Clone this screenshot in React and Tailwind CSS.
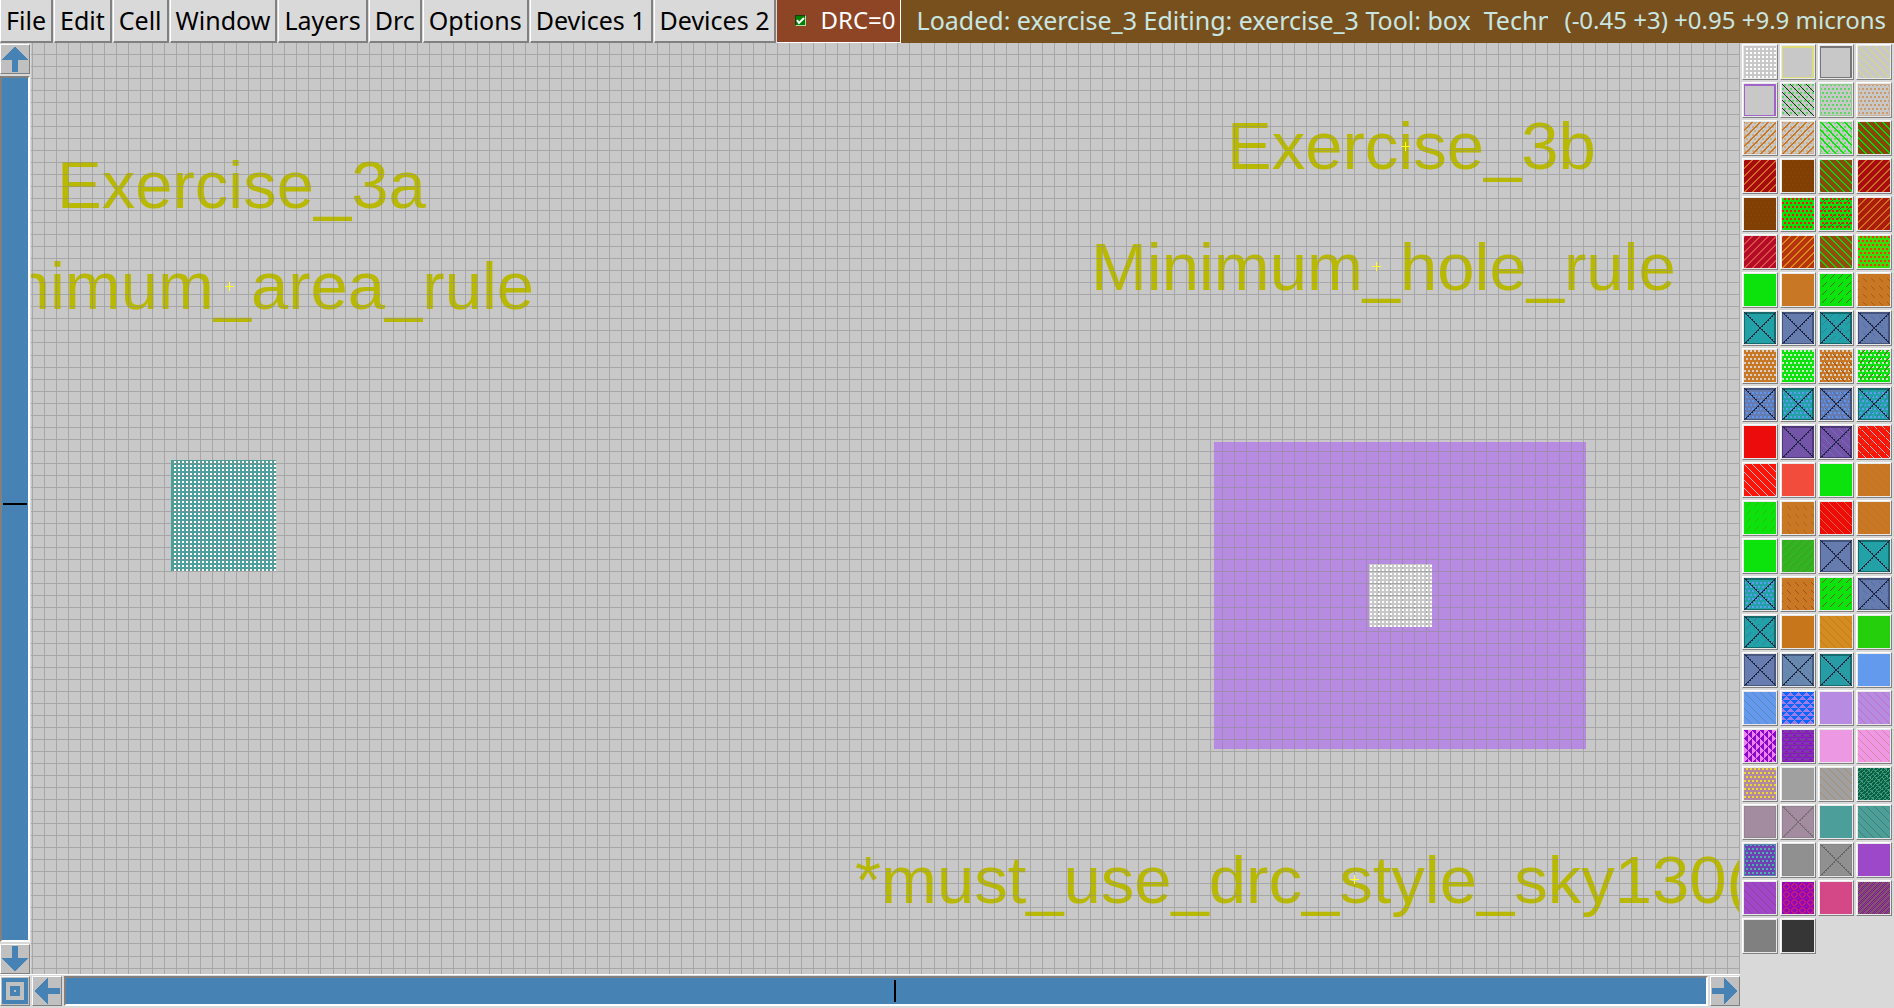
import React from "react";

const SIZE = 32;

/* ---- stipple patterns: each tells whether pixel (x, y) is painted ---- */
const grid = (x, y) => x % 4 >= 2 && y % 4 >= 2;
const stag = (x, y) => y % 4 < 2 && (x + (y % 8 < 4 ? 2 : 0)) % 4 < 2;
const back = (x, y) => (x - y + 64) % 8 === 0;
const back2 = (x, y) => (x - y + 64) % 8 < 2;
const fwd = (x, y) => (x + y) % 8 === 0;
const fwd2 = (x, y) => (x + y + 1) % 8 < 2;
const dashF = (x, y) => (x + y) % 8 === 6 && y % 8 < 5;
const dashB = (x, y) => (x - y + 64) % 8 === 1 && (y + 4) % 8 < 4;
const frame = (x, y) => x < 1 || y < 1 || x > 30 || y > 30;
const frame2 = (x, y) => x < 1 || y < 2 || x > 29 || y > 30;
const cross = (x, y) => x === y || x + y === 31 || (x % 2 === 0 && (x - y === 1 || x + y === 32));
const tri = (x, y) => {
  const cx = (x + (y % 8 < 4 ? 0 : 4)) % 8;
  return Math.abs(cx - 4) <= 3 - (y % 4);
};
const triSide = (x, y) => tri(y, 31 - x);
const rules = (x, y) => y % 4 === 2;
const rings = (x, y) => {
  const a = Math.abs((x % 8) - 4);
  const b = Math.abs((y % 8) - 4);
  const d = a + b;
  return (d >= 3 && d <= 4 && a < 4 && b < 4) || (a === 4 && b === 4);
};
const weave = (x, y) => (x + y) % 4 === 0 || ((x - y + 64) % 6 < 2 && (x + 2 * y) % 5 < 3);
const mesh = (x, y) => (x + y) % 2 === 0 || ((x >> 1) + (y >> 1)) % 3 === 0;

function pathFor(test) {
  let d = "";
  for (let y = 0; y < SIZE; y++) {
    let x = 0;
    while (x < SIZE) {
      if (!test(x, y)) {
        x++;
        continue;
      }
      const from = x;
      while (x < SIZE && test(x, y)) x++;
      d += `M${from} ${y}h${x - from}v1h${from - x}z`;
    }
  }
  return d;
}

const boxed = (bg, edge, ...extra) => [bg, ...extra, [frame2, edge], [cross, "#1b2440"]];
const TEAL = ["#22a2a6", "#166a6c"];
const SLATE = ["#677cae", "#45547c"];

const SWATCHES = [
  ["#c8c8c8", [grid, "#ffffff"]],
  ["#c8c8c8", [frame2, "#dcdc78"]],
  ["#c8c8c8", [frame2, "#787878"]],
  ["#c8c8c8", [back, "#dede62"]],

  ["#c8c8c8", [frame2, "#a064c8"]],
  ["#c8c8c8", [stag, "#5fd664"], [back, "#1c2c1c"]],
  ["#c8c8c8", [stag, "#5fd664"], [frame, "#90cc90"]],
  ["#c8c8c8", [stag, "#cc9a68"], [frame, "#ccb098"]],

  ["#c8c8c8", [stag, "#ccab88"], [frame, "#ccb098"], [fwd2, "#c87820"]],
  ["#c8c8c8", [stag, "#ccab88"], [frame, "#ccb098"], [fwd2, "#c87820"]],
  ["#c8c8c8", [stag, "#64dc64"], [frame, "#90cc90"], [back2, "#0be00b"]],
  ["#8a4408", [back2, "#0ad80a"]],

  ["#a80a0e", [fwd2, "#c87020"]],
  ["#804004", [stag, "#864206"]],
  ["#8a480c", [back2, "#10d010"]],
  ["#a80c0e", [fwd2, "#c87020"]],

  ["#804004", [stag, "#864206"]],
  ["#0edc0c", [stag, "#ee1608"]],
  ["#0edc0c", [stag, "#ee1608"], [dashF, "#406810"]],
  ["#ac1c0c", [fwd2, "#cc7018"]],

  ["#b40c28", [fwd2, "#d85040"]],
  ["#b8340c", [fwd2, "#d88c18"]],
  ["#964a10", [back2, "#20cc10"]],
  ["#38dc08", [stag, "#f03808"]],

  ["#0ce20c"],
  ["#c87824"],
  ["#0ce20c", [dashF, "#447408"]],
  ["#c87824", [dashB, "#a45c10"]],

  boxed(...TEAL),
  boxed(...SLATE),
  boxed(...TEAL, [dashF, "#347ca8"]),
  boxed(...SLATE, [dashB, "#526aa8"]),

  ["#c87824", [stag, "#d8d0c8"]],
  ["#0ce20c", [stag, "#cce4cc"]],
  ["#c87824", [stag, "#d8d0c8"], [dashB, "#a05010"]],
  ["#0ce20c", [stag, "#cce4cc"], [dashF, "#885020"]],

  boxed(...SLATE, [stag, "#5c94ee"]),
  boxed(...TEAL, [stag, "#5c9cf0"]),
  boxed(...SLATE, [stag, "#5c94ee"], [dashB, "#4a68a8"]),
  boxed(...TEAL, [stag, "#5c9cf0"], [dashF, "#3080a8"]),

  ["#ec0c0c"],
  boxed("#7454a8", "#503878"),
  boxed("#7454a8", "#503878", [back, "#7070b4"]),
  ["#fc1408", [back, "#c0b8c0"], [dashF, "#cc4410"]],

  ["#fc1408", [back, "#c0b8c0"]],
  ["#f24c3c"],
  ["#0ce20c"],
  ["#c87824", [back, "#c47420"]],

  ["#0ce20c", [dashF, "#38b40c"]],
  ["#c87824", [dashB, "#b0641c"]],
  ["#ec0c0c", [back, "#f06428"]],
  ["#c87824", [back, "#c07420"]],

  ["#0ce20c"],
  ["#38ac24", [fwd, "#20cc14"]],
  boxed(...SLATE),
  boxed(...TEAL),

  boxed(...TEAL, [stag, "#5c9cf0"]),
  ["#c87824", [dashB, "#a05010"]],
  ["#0ce20c", [dashF, "#746010"]],
  boxed(...SLATE, [dashB, "#526aa8"]),

  boxed(...TEAL, [dashF, "#347ca8"]),
  ["#c8761c"],
  ["#d48c20", [back, "#c07c20"]],
  ["#24d00c", [fwd, "#2cc80c"]],

  boxed("#687cb0", "#485880"),
  boxed("#6888b0", "#485c80", [back, "#6480ac"]),
  boxed("#289ca4", "#186c70"),
  ["#649aee"],

  ["#649aee", [back, "#6480b8"]],
  ["#9c7ce8", [tri, "#0c64f8"]],
  ["#b88be2"],
  ["#b88be2", [back, "#c070b8"]],

  ["#ec84ee", [triSide, "#8c08c8"]],
  ["#8c10c8", [tri, "#8038b0"], [rules, "#7c3898"]],
  ["#ec98e2"],
  ["#ec98e2", [back, "#e480a8"]],

  ["#b088a4", [stag, "#ecdc28"]],
  ["#a0a0a0"],
  ["#a0a0a0", [back, "#ac8c70"]],
  ["#0c6038", [weave, "#38988c"]],

  ["#a48ca0", [frame, "#948490"]],
  ["#a48ca0", [frame, "#948490"], [cross, "#766c74"]],
  ["#4c9e9a"],
  ["#4c9e9a", [back, "#488068"]],

  ["#7040b4", [stag, "#48b4a8"], [frame, "#5484b0"]],
  ["#909090", [frame, "#888888"]],
  ["#909090", [frame, "#888888"], [cross, "#646464"]],
  ["#9c48c8"],

  ["#9c48c8", [back, "#a03c98"]],
  ["#9008b8", [rings, "#c41c7c"]],
  ["#d44888"],
  ["#80189c", [mesh, "#84546c"]],

  ["#808080"],
  ["#363636"],
];

function Swatch({ layers, index }) {
  const [bg, ...patterns] = layers;
  return (
    <button
      type="button"
      aria-label={`Layer ${index + 1}`}
      className="border border-t-white border-l-white border-r-[#808080] border-b-[#808080] bg-[#e8e8e8] p-px"
    >
      <svg viewBox="0 0 32 32" className="block size-8" shapeRendering="crispEdges">
        <rect width="32" height="32" fill={bg} />
        {patterns.map(([test, color], i) => (
          <path key={i} d={pathFor(test)} fill={color} />
        ))}
      </svg>
    </button>
  );
}

const BUTTON =
  "size-[30px] shrink-0 border border-t-white border-l-white border-r-[#808080] border-b-[#808080] bg-[#c0c0c0] p-px";

function ArrowButton({ label, turn = "" }) {
  return (
    <button type="button" aria-label={label} className={BUTTON}>
      <svg viewBox="0 0 26 26" className={`block size-[26px] ${turn}`} shapeRendering="crispEdges">
        <path d="M13 0L26 14H16V26H10V14H0z" fill="#4682b4" />
      </svg>
    </button>
  );
}

const columns = Array.from({ length: 240 }, (_, i) => 1 + Math.round((i * 601) / 50));
const rows = Array.from({ length: 140 }, (_, i) => 11 + Math.round((i * 601) / 50));
const gridPath =
  columns.map((x) => `M${x} 0h1v1600h-1z`).join("") + rows.map((y) => `M0 ${y}h2800v1h-2800z`).join("");

const LABELS = [
  [26, 165, "Exercise_3a"],
  [-89, 266, "Minimum_area_rule"],
  [1196, 126, "Exercise_3b"],
  [1060, 247, "Minimum_hole_rule"],
  [824, 860, "*must_use_drc_style_sky130(full)"],
];

const MARKS = [
  [198, 243],
  [1374, 103],
  [1345, 223],
  [1323, 836],
];

function Layout() {
  return (
    <svg className="block h-full w-full" role="img" aria-label="Layout canvas">
      <defs>
        <pattern id="select" x="3" y="2" width="4" height="4" patternUnits="userSpaceOnUse">
          <rect width="2" height="2" fill="#ffffff" />
        </pattern>
      </defs>
      <rect width="100%" height="100%" fill="#c8c8c8" />
      <g shapeRendering="crispEdges">
        <rect x="140" y="417" width="105" height="111" fill="#4ba09b" />
        <path d="M1183 399h372v307h-372zM1338 521v63h63v-63z" fill="#b88be2" fillRule="evenodd" />
      </g>
      <g fill="#b9b900" fontSize="67" fontFamily='"Liberation Sans", Arial, sans-serif'>
        {LABELS.map(([x, y, text]) => (
          <text key={text} x={x} y={y}>
            {text}
          </text>
        ))}
      </g>
      <path d={gridPath} fill="#8c8c8c" fillOpacity="0.55" shapeRendering="crispEdges" />
      <g shapeRendering="crispEdges">
        <rect x="141" y="417" width="104" height="111" fill="url(#select)" />
        <rect x="1338" y="521" width="63" height="63" fill="url(#select)" />
        {MARKS.map(([x, y]) => (
          <path key={x} d={`M${x - 4} ${y}h9v1h-9zM${x} ${y - 4}h1v9h-1z`} fill="#ffff20" />
        ))}
      </g>
    </svg>
  );
}

const MENUS = ["File", "Edit", "Cell", "Window", "Layers", "Drc", "Options", "Devices 1", "Devices 2"];

export default function App() {
  return (
    <div className="flex h-screen flex-col overflow-hidden bg-[#d9d9d9] font-['Noto_Sans',sans-serif] text-[25px] leading-8 text-black">
      <header className="flex h-[43px] shrink-0 whitespace-nowrap">
        <nav className="flex shrink-0 gap-px">
          {MENUS.map((name) => (
            <button
              key={name}
              type="button"
              className="border-r-2 border-b-2 border-l border-r-[#808080] border-b-[#808080] border-l-white bg-[#d9d9d9] px-[5px] pb-[2px]"
            >
              {name}
            </button>
          ))}
        </nav>
        <label className="ml-px flex shrink-0 items-center gap-[14px] border-r border-b border-white bg-[#8e4526] pr-1 pb-[2px] pl-[18px] text-2xl text-white">
          <span className="relative size-[11px]">
            <input
              type="checkbox"
              defaultChecked
              className="block size-[11px] appearance-none border border-t-[#1c3c10] border-l-[#1c3c10] border-r-[#b8d8b0] border-b-[#b8d8b0] bg-[#008000]"
            />
            <svg viewBox="0 0 11 11" className="pointer-events-none absolute inset-0 size-[11px]">
              <path d="M2 5l2 3 5-5" fill="none" stroke="white" strokeWidth="2" />
            </svg>
          </span>
          DRC=0
        </label>
        <div className="flex min-w-0 flex-1 items-center bg-[#78501e] pr-2 pb-[3px] pl-4 text-[#c8e6e2]">
          <div className="min-w-0 flex-1 overflow-hidden whitespace-pre">
            Loaded: exercise_3 Editing: exercise_3 Tool: box  Technology: sky130A
          </div>
          <div className="ml-4 shrink-0 text-2xl leading-8">(-0.45 +3) +0.95 +9.9 microns</div>
        </div>
      </header>

      <div className="flex min-h-0 flex-1">
        <div className="flex min-w-0 flex-1 flex-col">
          <div className="flex min-h-0 flex-1">
            <div className="flex w-[31px] shrink-0 flex-col gap-[2px] pt-px">
              <ArrowButton label="Scroll up" />
              <div className="flex w-[30px] flex-1 flex-col border-2 border-t-[#808080] border-r-white border-b-white border-l-[#808080] bg-[#4682b4] px-px">
                <div className="grow-[425]" />
                <div className="h-[2px] w-full bg-black" />
                <div className="grow-[435]" />
              </div>
              <ArrowButton label="Scroll down" turn="rotate-180" />
            </div>
            <div className="min-w-0 flex-1 border-r border-[#a8a8a8]">
              <Layout />
            </div>
          </div>
          <div className="flex h-[34px] shrink-0 gap-[2px] border-t border-white pt-px">
            <button type="button" aria-label="Zoom to fit" className={BUTTON}>
              <svg viewBox="0 0 26 26" className="block size-[26px]" shapeRendering="crispEdges">
                <path
                  d="M0 0h26v26H0zM4 4v18h18V4zM8 8h10v10H8zM12 12v2h2v-2z"
                  fill="#4682b4"
                  fillRule="evenodd"
                />
              </svg>
            </button>
            <ArrowButton label="Scroll left" turn="-rotate-90" />
            <div className="flex h-[30px] flex-1 border-2 border-t-[#808080] border-r-white border-b-white border-l-[#808080] bg-[#4682b4] py-[2px]">
              <div className="grow-[828]" />
              <div className="h-full w-[2px] bg-black" />
              <div className="grow-[811]" />
            </div>
            <ArrowButton label="Scroll right" turn="rotate-90" />
          </div>
        </div>
        <aside className="grid shrink-0 grid-cols-4 content-start gap-[2px] pt-px pr-[2px] pl-[2px]">
          {SWATCHES.map((layers, i) => (
            <Swatch key={i} index={i} layers={layers} />
          ))}
        </aside>
      </div>
    </div>
  );
}
